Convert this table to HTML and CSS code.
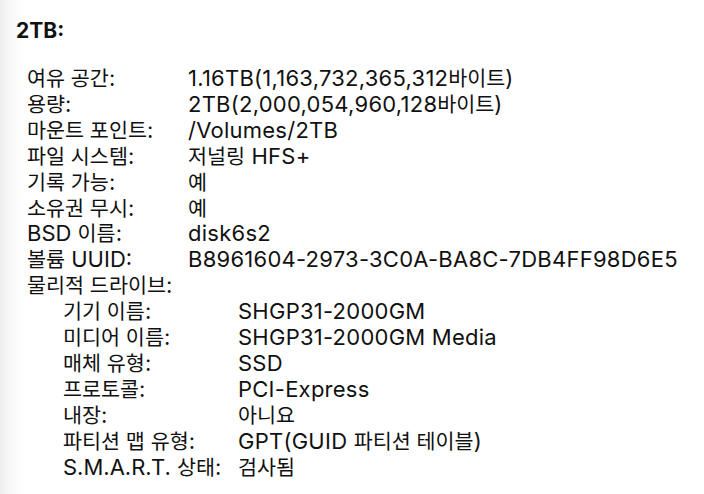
FILE: index.html
```html
<!DOCTYPE html>
<html lang="ko">
<head>
<meta charset="utf-8">
<link rel="stylesheet" href="styles.css">
</head>
<body>
<div class="page">
  <h1 class="title">2TB:</h1>
  <dl class="props">
    <dt><span class="ko">여유 공간</span>:</dt><dd>1.16TB(1,163,732,365,312<span class="ko">바이트</span>)</dd>
    <dt><span class="ko">용량</span>:</dt><dd>2TB(2,000,054,960,128<span class="ko">바이트</span>)</dd>
    <dt><span class="ko">마운트 포인트</span>:</dt><dd>/Volumes/2TB</dd>
    <dt><span class="ko">파일 시스템</span>:</dt><dd><span class="ko">저널링</span> HFS+</dd>
    <dt><span class="ko">기록 가능</span>:</dt><dd><span class="ko">예</span></dd>
    <dt><span class="ko">소유권 무시</span>:</dt><dd><span class="ko">예</span></dd>
    <dt>BSD <span class="ko">이름</span>:</dt><dd>disk6s2</dd>
    <dt><span class="ko">볼륨</span> UUID:</dt><dd>B8961604-2973-3C0A-BA8C-7DB4FF98D6E5</dd>
    <dt class="full"><span class="ko">물리적 드라이브</span>:</dt>
  </dl>
  <dl class="props nested">
    <dt><span class="ko">기기 이름</span>:</dt><dd>SHGP31-2000GM</dd>
    <dt><span class="ko">미디어 이름</span>:</dt><dd>SHGP31-2000GM Media</dd>
    <dt><span class="ko">매체 유형</span>:</dt><dd>SSD</dd>
    <dt><span class="ko">프로토콜</span>:</dt><dd>PCI-Express</dd>
    <dt><span class="ko">내장</span>:</dt><dd><span class="ko">아니요</span></dd>
    <dt><span class="ko">파티션 맵 유형</span>:</dt><dd>GPT(GUID <span class="ko">파티션 테이블</span>)</dd>
    <dt>S.M.A.R.T. <span class="ko">상태</span>:</dt><dd><span class="ko">검사됨</span></dd>
  </dl>
</div>
</body>
</html>
```
FILE: styles.css
```css
html, body {
  margin: 0;
  padding: 0;
}
body {
  width: 704px;
  height: 494px;
  overflow: hidden;
  background: linear-gradient(to right, #eeeeee 0px, #fafafa 12px, #ffffff 24px);
  font-family: "Inter", "Noto Sans CJK KR", sans-serif;
  color: #111111;
}
.page {
  padding: 18px 0 0 16px;
}
.title {
  margin: 0;
  font-size: 21px;
  font-weight: 700;
  line-height: 26px;
}
.props {
  margin: 22px 0 0 11px;
  display: grid;
  grid-template-columns: 161px auto;
  font-size: 22px;
  line-height: 25.9px;
}
.props dt, .props dd {
  margin: 0;
  white-space: nowrap;
}
.props dd {
  letter-spacing: 0.25px;
}
.ko {
  font-size: 0.94em;
  letter-spacing: 0;
}
.props dt.full {
  grid-column: 1 / -1;
}
.nested {
  margin: 0 0 0 47px;
  grid-template-columns: 175px auto;
}
```
